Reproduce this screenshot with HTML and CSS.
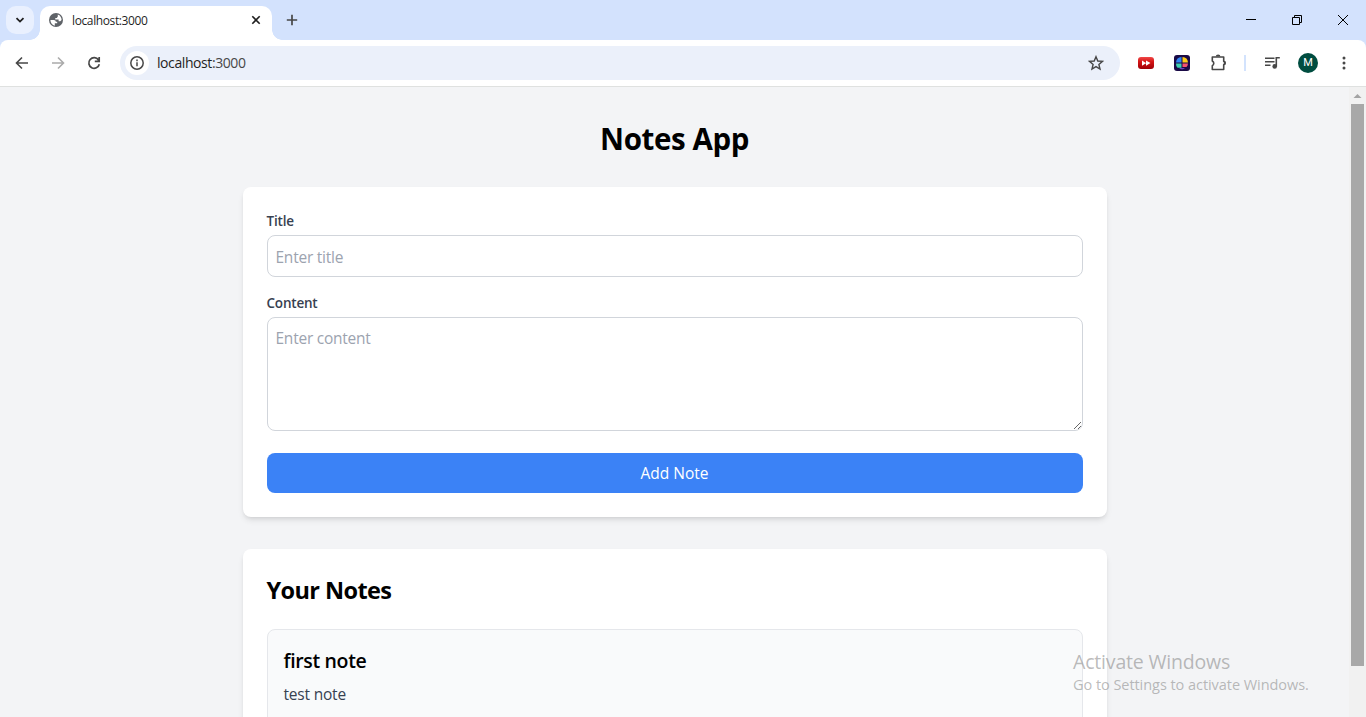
FILE: index.html
```html
<!DOCTYPE html>
<html lang="en">
<head>
<meta charset="utf-8">
<title>localhost:3000</title>
<link rel="stylesheet" href="styles.css">
</head>
<body>
<div class="window">
  <div class="tabstrip">
    <div class="tab-search"><svg width="28" height="28" viewBox="0 0 28 28"><path d="M10.500 12.200l3.500 3.400 3.500-3.400" fill="none" stroke="#1f1f1f" stroke-width="1.800"/></svg></div>
    <div class="tab">
      <svg class="globe" width="16" height="16" viewBox="0 0 16 16"><circle cx="8" cy="8" r="7" fill="#5f6368"/><path d="M2.400 8h3.400c1.300 0 2 .8 2 1.800h1.400v1.500H6.800v2.500C4.300 13.300 2.400 11 2.400 8zM9.800 2.500C12.200 3.300 13.700 5.600 13.600 8l-1.300 1.300H10.600V7.600H7.300V6h1.500l1-1.600z" fill="#fff"/></svg>
      <span class="tab-title">localhost:3000</span>
      <svg class="tab-close" width="16" height="16" viewBox="0 0 16 16"><path d="M4.300 4.300l7.400 7.400M11.700 4.300l-7.400 7.400" stroke="#1f1f1f" stroke-width="1.600"/></svg>
    </div>
    <svg class="new-tab" width="16" height="16" viewBox="0 0 16 16"><path d="M8 2.800v10.400M2.800 8h10.400" stroke="#474747" stroke-width="1.700"/></svg>
    <div class="win-buttons">
      <svg width="46" height="40" viewBox="0 0 46 40"><path d="M18 19.500h10" stroke="#000"/></svg>
      <svg width="46" height="40" viewBox="0 0 46 40"><path d="M18.500 17.500h7v7h-7zM20.500 17.500v-2h7v7h-2" fill="none" stroke="#000"/></svg>
      <svg width="46" height="40" viewBox="0 0 46 40"><path d="M18 15l10 10M28 15l-10 10" stroke="#000"/></svg>
    </div>
  </div>
  <div class="toolbar">
    <svg class="nav" width="36" height="36" viewBox="0 0 36 36"><path d="M24 18H13M18 12.500L12.500 18l5.500 5.500" fill="none" stroke="#474747" stroke-width="1.600"/></svg>
    <svg class="nav" width="36" height="36" viewBox="0 0 36 36"><path d="M12 18h11M18 12.500l5.500 5.500-5.500 5.500" fill="none" stroke="#ababab" stroke-width="1.600"/></svg>
    <svg class="nav" width="36" height="36" viewBox="0 0 36 36"><path d="M22.500 15a5.300 5.300 0 1 0 .8 4.200M23.200 12v4.400h-4.400" fill="none" stroke="#474747" stroke-width="1.700"/></svg>
    <div class="omnibox">
      <span class="site-info"><svg width="16" height="16" viewBox="0 0 16 16"><circle cx="8" cy="8" r="6.200" fill="none" stroke="#474747" stroke-width="1.500"/><path d="M8 7.300v4M8 4.600v1.600" stroke="#474747" stroke-width="1.500"/></svg></span>
      <span class="url">localhost<i>:3000</i></span>
      <svg class="star" width="16" height="16" viewBox="0 0 16 16"><path d="M8 1.700l1.800 4.300 4.700.4-3.600 3.100 1.100 4.600L8 11.600l-4 2.500 1.100-4.600L1.500 6.400l4.700-.4z" fill="none" stroke="#474747" stroke-width="1.400"/></svg>
    </div>
    <div class="actions">
      <svg width="36" height="36" viewBox="0 0 36 36"><defs><linearGradient id="red" x2="0" y2="1"><stop offset="0" stop-color="#f04848"/><stop offset=".4" stop-color="#d41414"/><stop offset="1" stop-color="#a00008"/></linearGradient></defs><rect x="10" y="12" width="16" height="12" rx="3" fill="url(#red)"/><path d="M14 15.500l4 2.500v-2.500l4.500 2.500-4.500 2.700V18.300L14 20.700z" fill="#fff"/></svg>
      <svg width="36" height="36" viewBox="0 0 36 36"><rect x="10" y="10" width="16" height="16" rx="3" fill="#1a0a46"/><path d="M17.500 12v5.500h-5.500a6 6 0 0 1 5.500-5.500z" fill="#2f87f5"/><path d="M18.500 12a6 6 0 0 1 5.500 5.500h-5.500z" fill="#ffcb18"/><path d="M12 18.500h5.500v4.300h-4a6 6 0 0 1-1.500-4.300z" fill="#3ed1b0"/><path d="M18.500 18.500h5.500a6 6 0 0 1-1.500 3.500h-4z" fill="#f5536e"/><path d="M15 23.300h6a6 6 0 0 1-6 0z" fill="#8659f0"/></svg>
      <svg class="puzzle" width="36" height="36" viewBox="0 0 36 36"><path d="M12.300 12h11.400v4.200a2 2 0 0 1 0 3.500v4.800H12.300v-3.800a2.600 2.600 0 0 0 0-4.700z" fill="none" stroke="#474747" stroke-width="1.600" stroke-linejoin="round"/><path d="M15.800 11.500a2.300 2 0 0 1 4.600 0zM24 15.700a2 2.300 0 0 1 0 4.600z" fill="#474747"/></svg>
      <span class="divider"></span>
      <svg class="media" width="36" height="36" viewBox="0 0 36 36"><path d="M11 13.300h9.500M11 16.700h9.500M11 20.200h5.500" stroke="#474747" stroke-width="1.500"/><path d="M22.300 21.500v-8.700h3.500" fill="none" stroke="#474747" stroke-width="1.600"/><circle cx="20.700" cy="21.400" r="2.300" fill="#474747"/></svg>
      <span class="avatar">M</span>
      <svg class="menu" width="16" height="16" viewBox="0 0 16 16"><g fill="#474747"><circle cx="8" cy="3" r="1.500"/><circle cx="8" cy="8" r="1.500"/><circle cx="8" cy="13" r="1.500"/></g></svg>
    </div>
  </div>
  <div class="viewport">
    <main class="page">
      <h1>Notes App</h1>
      <form class="card">
        <label for="title">Title</label>
        <input id="title" class="field title-field" type="text" placeholder="Enter title">
        <label for="content">Content</label>
        <textarea id="content" class="field content-field" placeholder="Enter content"></textarea>
        <button class="submit" type="button">Add Note</button>
      </form>
      <section class="card">
        <h2>Your Notes</h2>
        <article class="note">
          <h3>first note</h3>
          <p>test note</p>
        </article>
      </section>
    </main>
    <div class="scrollbar"><svg width="17" height="17" viewBox="0 0 17 17"><path d="M4.500 11h8L8.500 7z" fill="#a3a3a3"/></svg><div class="thumb"></div></div>
  </div>
  <div class="watermark"><div class="wm-title">Activate Windows</div><div class="wm-text">Go to Settings to activate Windows.</div></div>
</div>
</body>
</html>
```

FILE: styles.css
```css
* { box-sizing: border-box; margin: 0; }
body { font-family: "Open Sans", "Noto Sans", sans-serif; font-size: 15.5px; line-height: 24px; color: #000; overflow: hidden; }
svg { display: block; flex: none; }
.window { position: relative; width: 1366px; height: 717px; display: flex; flex-direction: column; overflow: hidden; background: #d3e2fd; }
.tabstrip { height: 40px; flex: none; display: flex; align-items: center; padding-left: 6px; }
.tab-search { width: 28px; height: 28px; border-radius: 10px; background: #e9f0fe; margin-right: 6px; }
.tab { position: relative; width: 232px; height: 34px; align-self: flex-end; background: #fff; border-radius: 10px 10px 0 0; display: flex; align-items: center; padding: 0 8px 6px; }
.tab::before, .tab::after { content: ""; position: absolute; bottom: 0; width: 10px; height: 10px; }
.tab::before { left: -10px; background: radial-gradient(circle at 0 0, transparent 9.5px, #fff 10px); }
.tab::after { right: -10px; background: radial-gradient(circle at 100% 0, transparent 9.5px, #fff 10px); }
.tab-title { margin-left: 8px; padding-top: 1px; font-size: 12px; line-height: 16px; letter-spacing: -.38px; color: #1f1f1f; flex: 1; }
.new-tab { margin-left: 12px; }
.win-buttons { margin-left: auto; display: flex; }
.toolbar { height: 47px; flex: none; background: #fff; border-radius: 8px 8px 0 0; border-bottom: 1px solid #dfe1e0; display: flex; align-items: center; padding-left: 4px; }
.omnibox { margin-left: 8px; width: 1000px; height: 34px; border-radius: 17px; background: #ebf0fa; display: flex; align-items: center; padding: 0 16px 0 5px; }
.site-info { width: 24px; height: 24px; border-radius: 50%; background: #fff; display: grid; place-items: center; }
.url { margin-left: 8px; flex: 1; font-size: 14px; letter-spacing: -.42px; color: #1f1f1f; }
.url i { font-style: normal; color: #474747; }
.actions { display: flex; align-items: center; margin-left: 8px; }
.divider { width: 2px; height: 16px; background: #d3e3fd; margin-left: 8px; }
.media { margin-left: 8px; }
.avatar { width: 20px; height: 20px; margin-left: 8px; border-radius: 50%; background: #004d40; color: #fff; font: 11px/20px Roboto, sans-serif; text-align: center; }
.menu { margin-left: 18px; }
.viewport { flex: 1; min-height: 0; display: flex; background: #f3f4f6; overflow: hidden; }
.page { flex: 1; padding: 32px 242.5px 0; }
h1 { font-size: 29.5px; line-height: 36px; font-weight: 700; letter-spacing: -.4px; text-align: center; margin-bottom: 32px; padding-top: 2px; height: 36px; }
.card { display: block; background: #fff; border-radius: 8px; padding: 24px; margin-bottom: 32px; box-shadow: 0 4px 6px -1px rgba(0,0,0,.1), 0 2px 4px -2px rgba(0,0,0,.1); }
label { display: block; font-size: 13.5px; line-height: 20px; font-weight: 600; letter-spacing: -.2px; color: #374151; margin-bottom: 4px; }
.field { display: block; width: 100%; border: 1px solid #d1d5db; border-radius: 8px; padding: 8px; font: inherit; letter-spacing: -.24px; outline: none; background: #fff; }
.field::placeholder { color: #9ca3af; opacity: 1; }
.title-field { height: 42px; margin-bottom: 16px; padding-top: 9px; }
.content-field { height: 114px; margin-bottom: 22px; resize: vertical; }
.submit { display: block; width: 100%; height: 40px; border: 0; border-radius: 8px; background: #3b82f6; color: #fff; font: inherit; }
h2 { font-size: 23.5px; line-height: 32px; height: 32px; padding-top: 1px; font-weight: 700; letter-spacing: -.6px; margin-bottom: 24px; }
.note { border: 1px solid #e5e7eb; border-radius: 8px; background: #f9fafb; padding: 16px; height: 140px; }
h3 { font-size: 19.5px; line-height: 28px; height: 28px; padding-top: 1px; font-weight: 600; letter-spacing: -.35px; margin-bottom: 8px; }
.note p { color: #374151; letter-spacing: -.2px; }
.scrollbar { width: 17px; background: #f1f1f1; }
.thumb { width: 13px; height: 562px; margin-left: 2px; background: #a8a8a8; }
.watermark { position: absolute; left: 1073px; top: 650px; color: rgba(130,130,130,.55); }
.wm-title { font-size: 19.5px; line-height: 24px; letter-spacing: -.18px; }
.wm-text { font-size: 14.5px; line-height: 21px; letter-spacing: -.05px; white-space: nowrap; }
```
